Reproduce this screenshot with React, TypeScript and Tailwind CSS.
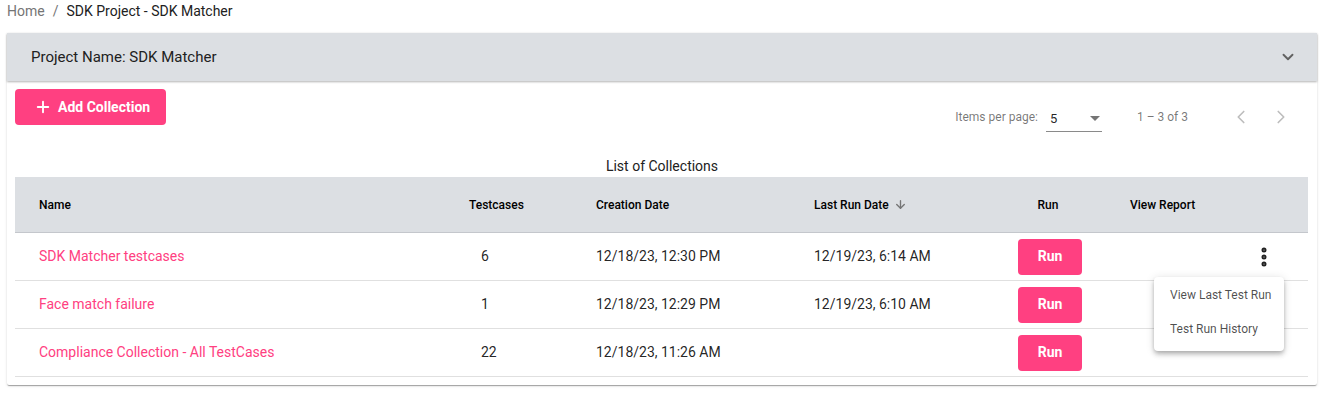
import { ChevronDown, ChevronLeft, ChevronRight, Plus, ArrowDown, EllipsisVertical } from 'lucide-react'

const collections = [
    { name: 'SDK Matcher testcases', testcases: 6, created: '12/18/23, 12:30 PM', lastRun: '12/19/23, 6:14 AM' },
    { name: 'Face match failure', testcases: 1, created: '12/18/23, 12:29 PM', lastRun: '12/19/23, 6:10 AM' },
    { name: 'Compliance Collection - All TestCases', testcases: 22, created: '12/18/23, 11:26 AM', lastRun: '' },
]

const cols = 'grid grid-cols-[430px_127px_218px_200px_116px_202px]'

export default function App() {
    return (
        <div className="w-[1328px] h-[412px] bg-white text-[14px] text-[rgba(0,0,0,0.87)]" style={{ fontFamily: 'Roboto, "Liberation Sans", sans-serif' }}>
            {/* breadcrumb */}
            <div className="flex items-center h-[21px] pl-[7px] text-[14px] leading-[20px]">
                <span className="text-[#757575]">Home</span>
                <span className="mx-[8px] text-[#757575]">/</span>
                <span className="text-[#212121]">SDK Project - SDK Matcher</span>
            </div>

            <div className="relative ml-[7px] mt-[12px] w-[1310px] bg-white rounded-[2px] shadow-[0_2px_1px_-1px_rgba(0,0,0,0.2),0_1px_1px_0_rgba(0,0,0,0.14),0_1px_3px_0_rgba(0,0,0,0.12)]">
                {/* expansion header */}
                <div className="flex items-center justify-between h-[48px] pl-[24px] pr-[20px] bg-[#dcdfe3] shadow-[0_1px_2px_rgba(0,0,0,0.3)]">
                    <span className="text-[15px] text-[#212121]">Project Name: SDK Matcher</span>
                    <ChevronDown className="h-[18px] w-[18px] text-[#616161]" strokeWidth={2.5} />
                </div>

                <div className="px-[8px] pt-[8px] pb-[8px]">
                    <div className="flex justify-between">
                        <button className="flex items-center h-[36px] w-[151px] pl-[19px] rounded-[4px] bg-[#ff4081] text-white text-[14px] font-bold">
                            <Plus className="h-[18px] w-[18px] mr-[6px]" strokeWidth={2.5} />
                            Add Collection
                        </button>
                        <div className="flex items-center h-[56px] pr-[8px] text-[12px] text-[rgba(0,0,0,0.54)]">
                            <span>Items per page:</span>
                            <div className="ml-[8px] w-[56px] h-[30px] flex items-center justify-between border-b border-[#8a8a8a] pl-[4px] pr-[2px] pt-[4px]">
                                <span className="text-[13px] text-[rgba(0,0,0,0.87)]">5</span>
                                <span className="w-0 h-0 border-l-[5px] border-r-[5px] border-t-[5px] border-l-transparent border-r-transparent border-t-[#757575]"></span>
                            </div>
                            <span className="ml-[35px] mr-[33px]">1 – 3 of 3</span>
                            <div className="flex">
                                <span className="w-[40px] h-[40px] flex items-center justify-center">
                                    <ChevronLeft className="h-[22px] w-[22px] text-[#bdbdbd]" strokeWidth={1.8} />
                                </span>
                                <span className="w-[40px] h-[40px] flex items-center justify-center">
                                    <ChevronRight className="h-[22px] w-[22px] text-[#bdbdbd]" strokeWidth={1.8} />
                                </span>
                            </div>
                        </div>
                    </div>

                    <div className="mt-[11px] h-[21px] text-center leading-[20px] text-[14px] text-[#212121]">List of Collections</div>

                    {/* table */}
                    <div className="w-[1293px]">
                        <div className={`${cols} h-[56px] items-center bg-[#dcdfe3] border-b border-[#c4c7cc] text-[12px] font-medium text-black`}>
                            <div className="pl-[24px]">Name</div>
                            <div className="pl-[24px]">Testcases</div>
                            <div className="pl-[24px]">Creation Date</div>
                            <div className="pl-[24px] flex items-center">
                                Last Run Date
                                <ArrowDown className="ml-[5px] h-[13px] w-[13px] text-[#757575]" strokeWidth={2.5} />
                            </div>
                            <div className="text-center">Run</div>
                            <div className="pl-[24px]">View Report</div>
                        </div>
                        {collections.map((c, i) => (
                            <div key={c.name} className={`${cols} h-[48px] items-center border-b border-[#e0e0e0]`}>
                                <div className="pl-[24px] text-[#ff4081]">{c.name}</div>
                                <div className="pl-[36px]">{c.testcases}</div>
                                <div className="pl-[24px]">{c.created}</div>
                                <div className="pl-[24px]">{c.lastRun}</div>
                                <div className="flex justify-center pl-[4px]">
                                    <button className="w-[64px] h-[36px] rounded-[4px] bg-[#ff4081] text-white text-[14px] font-bold">Run</button>
                                </div>
                                <div className="flex justify-end pr-[32px]">
                                    {i === 0 && <EllipsisVertical className="h-[24px] w-[24px] text-[#212121]" strokeWidth={3} />}
                                </div>
                            </div>
                        ))}
                    </div>
                </div>

                {/* row menu */}
                <div className="absolute left-[1147px] top-[244px] w-[130px] pt-[2px] pb-[4px] bg-white rounded-[4px] shadow-[0_2px_4px_-1px_rgba(0,0,0,0.2),0_4px_5px_0_rgba(0,0,0,0.14),0_1px_10px_0_rgba(0,0,0,0.12)] text-[12px] text-[rgba(0,0,0,0.7)]">
                    <div className="h-[31px] flex items-center pl-[16px]">View Last Test Run</div>
                    <div className="h-[37px] flex items-center pl-[16px]">Test Run History</div>
                </div>
            </div>
        </div>
    )
}
